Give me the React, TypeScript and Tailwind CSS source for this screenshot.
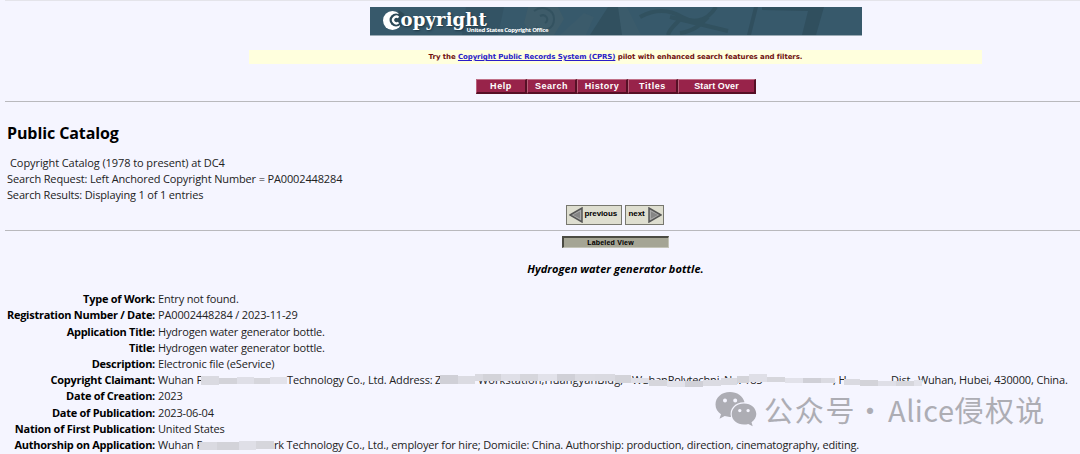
const NAV_BUTTONS = [
  { name: 'Help', width: 'w-[51px]', tracking: 'tracking-[0.6px]' },
  { name: 'Search', width: 'w-[50px]', tracking: 'tracking-[0.5px]' },
  { name: 'History', width: 'w-[51px]', tracking: 'tracking-[0.5px]' },
  { name: 'Titles', width: 'w-[50px]', tracking: 'tracking-[0.6px]' },
  { name: 'Start Over', width: 'w-[78px]', tracking: 'tracking-[0.1px]' },
];

const RECORD = [
  { label: 'Type of Work:', value: 'Entry not found.' },
  { label: 'Registration Number / Date:', value: 'PA0002448284 / 2023-11-29' },
  { label: 'Application Title:', value: 'Hydrogen water generator bottle.' },
  { label: 'Title:', value: 'Hydrogen water generator bottle.' },
  { label: 'Description:', value: 'Electronic file (eService)' },
  { label: 'Copyright Claimant:', value: <Claimant /> },
  { label: 'Date of Creation:', value: '2023' },
  { label: 'Date of Publication:', value: '2023-06-04' },
  { label: 'Nation of First Publication:', value: 'United States' },
  { label: 'Authorship on Application:', value: <Authorship /> },
];

const SMUDGE = ['#dadae1', '#d3d3d9', '#dfdfe7', '#d6d6dc', '#e2e2ea', '#d0d0d7', '#dbdbe2'];

// Mosaic strip, each block is [x, y, width, height]
function Smudge({ width, blocks }: { width: number; blocks: number[][] }) {
  return (
    <svg width={width} height="16" className="absolute left-0 top-0 overflow-visible">
      {blocks.map(([x, y, w, h], i) => (
        <rect key={i} x={x} y={y} width={w} height={h} fill={SMUDGE[i % SMUDGE.length]} />
      ))}
    </svg>
  );
}

function Claimant() {
  return (
    <span className="flex">
      <span className="w-[129px]">Wuhan F</span>
      <span className="w-[148px]">Technology Co., Ltd. Address: </span>
      <span className="w-[43px]">Z</span>
      <span className="w-[154px] tracking-[0.1px]">Workstation,HuangyanBldg,</span>
      <span className="w-[92px]">WuhanPolytechni</span>
      <span className="w-[109px]">No. 185</span>
      <span className="w-[58px]">, H</span>
      <span className="w-[27px]">Dist.</span>
      <span className="tracking-[-0.16px]">Wuhan, Hubei, 430000, China.</span>
      <Smudge
        width={900}
        blocks={[
          [43, 4, 18, 9], [61, 6, 18, 6], [79, 5, 17, 7], [96, 6, 16, 6], [112, 5, 17, 7],
          [282, 3, 18, 9], [300, 4, 17, 8], [317, 2, 8, 7], [325, 2, 18, 7], [343, 2, 19, 7],
          [362, 2, 18, 7], [380, 2, 19, 7], [399, 2, 18, 7], [417, 2, 20, 7], [437, 2, 20, 7],
          [457, 3, 16, 8], [473, 6, 18, 5], [491, 8, 18, 6], [509, 9, 18, 6], [527, 9, 18, 6],
          [545, 8, 18, 6], [563, 6, 16, 7], [579, 4, 12, 7], [591, 2, 18, 8], [609, 5, 18, 5],
          [627, 6, 18, 5], [645, 6, 18, 5], [663, 6, 14, 5], [686, 7, 16, 6], [702, 8, 18, 6],
          [720, 9, 18, 5], [738, 9, 18, 5], [756, 8, 8, 6],
        ]}
      />
    </span>
  );
}

function Authorship() {
  return (
    <span className="flex">
      <span className="w-[116px]">Wuhan F</span>
      <span className="tracking-[-0.17px]">rk Technology Co., Ltd., employer for hire; Domicile: China. Authorship: production, direction, cinematography, editing.</span>
      <Smudge
        width={120}
        blocks={[[41, 5, 18, 8], [59, 5, 22, 8], [81, 4, 17, 9], [98, 4, 18, 8]]}
      />
    </span>
  );
}

function Banner() {
  return (
    <div className="relative mx-auto h-[29px] w-[492px] overflow-hidden border-b border-[#9babb5] bg-[#37596b]">
      <svg width="492" height="28" className="absolute inset-0" fill="none">
        <path d="M96 0h38l-6 28H92z" fill="#335364" />
        <path d="M158 0h30l6 12-10 16h-22l-8-12z" fill="#3e5c6a" />
        <path d="M164 4c8-6 20-2 20 8s-10 14-18 8M170 9c6-3 10 4 5 7" stroke="#335260" strokeWidth="2" />
        <path d="M190 28l24-22 10 4-8 18zM245 0h12l14 28h-26z" fill="#3b5b6b" />
        <path d="M238 0h10l4 28h-32z" fill="#31505f" />
        <path d="M270 10c18-10 32-6 42 0s24 6 34-10M312 10c-4 6-12 10-14 18M338 10c-8 8-14 14-28 16M300 10l58 14" stroke="#31515f" strokeWidth="4" />
        <path d="M384 0h4l-7 28h-4zM436 0h18l-8 28h-14l6-24-46-1v-3z" fill="#304f5e" />
        <circle cx="22.500" cy="13.500" r="9.500" fill="#fff" />
        <circle cx="26" cy="13" r="6.500" fill="#2c4957" />
        <path d="M28.500 3l6 4-3 13-3-3z" fill="#2c4957" />
        <path d="M28.500 10.500a3.300 3.300 0 1 0 0 5" stroke="#fff" strokeWidth="2.200" />
      </svg>
      <span className="absolute left-[31px] top-[1px] whitespace-nowrap font-['DejaVu_Serif',serif] text-[18px] font-bold leading-[24px] tracking-[0.15px] text-white [text-shadow:1px_1px_2px_#1b3340]">
        opyright
      </span>
      <span className="absolute left-[97px] top-[18px] whitespace-nowrap font-['Open_Sans',sans-serif] text-[6px] font-bold leading-[10px] tracking-[-0.3px] text-white">
        United States Copyright Office
      </span>
    </div>
  );
}

function Watermark() {
  return (
    <div className="absolute left-[715px] top-[389px] flex h-[40px] items-center whitespace-nowrap font-['Noto_Sans_CJK_SC',sans-serif] text-[29px] leading-[40px] text-[#adadb4]">
      <svg width="42" height="36" viewBox="0 0 42 36">
        <path
          fill="currentColor"
          fillRule="evenodd"
          d="M15 1C6.500 1 .5 6.500 .5 13.500c0 4 2 7.500 5.500 9.800l-1.500 4.500 5.200-2.700c2 .6 4 1 6.300.8C14 18 20 11 29.500 11.300 28 5 22 1 15 1zM10 7.400a2 2 0 1 0 0 4 2 2 0 0 0 0-4zm10.200 0a2 2 0 1 0 0 4 2 2 0 0 0 0-4z"
        />
        <path
          fill="currentColor"
          fillRule="evenodd"
          d="M29 12.500c-7 0-12.300 4.700-12.300 10.600S22 33.600 29 33.600c1.600 0 3-.3 4.300-.7l4.400 2.400-1.200-4c3-2 4.800-5 4.800-8.200 0-6-5.300-10.600-12.300-10.600zm-4.200 5.400a1.700 1.700 0 1 0 0 3.400 1.700 1.700 0 0 0 0-3.400zm8.300 0a1.700 1.700 0 1 0 0 3.400 1.700 1.700 0 0 0 0-3.400z"
        />
      </svg>
      <span className="ml-[7px] w-[91px] tracking-[1.8px]">公众号</span>
      <span className="w-[30px] text-center">·</span>
      <span className="ml-[3px] tracking-[0.5px]">Alice</span>
      <span className="tracking-[1.4px]">侵权说</span>
    </div>
  );
}

export default function App() {
  return (
    <div className="relative h-[454px] w-[1080px] overflow-hidden bg-[#f5f5ff] font-['Open_Sans',sans-serif] text-[11px] tracking-[-0.16px] text-[#222]">
      <div className="ml-[5px] w-[1221px] border-t border-[#e4e4ea] pt-[6px]">
        <Banner />

        <div className="mx-auto mt-[14px] h-[14px] w-[733px] bg-[#ffffdd] text-center font-['DejaVu_Sans',sans-serif] text-[7px] font-bold leading-[15px] tracking-[-0.08px] text-[#701010]">
          Try the <a className="text-[#2a1cc8] underline">Copyright Public Records System (CPRS)</a> pilot with
          enhanced search features and filters.
        </div>

        <nav className="mt-[15px] flex justify-center">
          {NAV_BUTTONS.map((button) => (
            <button
              key={button.name}
              className={`h-[15px] border border-b-2 border-r-2 border-b-[#561026] border-l-[#b8607a] border-r-[#561026] border-t-[#c07088] bg-[#98234a] pl-px text-center font-['Liberation_Sans',sans-serif] text-[9px] font-bold leading-[12px] text-white ${button.width} ${button.tracking}`}
            >
              {button.name}
            </button>
          ))}
        </nav>

        <hr className="mt-[7px] border-[#b9b9bd]" />

        <h1 className="ml-[2px] mt-[20px] text-[16px] font-bold leading-[22px] tracking-[-0.1px] text-black">Public Catalog</h1>

        <div className="ml-[2px] mt-[11px] leading-[16.2px]">
          <p className="ml-[3px] tracking-[-0.08px]">Copyright Catalog (1978 to present) at DC4</p>
          <p className="tracking-[-0.14px]">Search Request: Left Anchored Copyright Number = PA0002448284</p>
          <p>Search Results: Displaying 1 of 1 entries</p>
        </div>

        <div className="mr-[2px] mt-[1px] flex justify-center gap-[3px] font-['Liberation_Sans',sans-serif] text-[8px] font-bold tracking-[-0.1px] text-black">
          <button className="flex h-[20px] w-[56px] items-center border border-[#77776f] bg-[#deded0] pl-[2px]">
            <svg width="14" height="16" viewBox="0 0 14 16">
              <path d="M1 8L13 1v14z" fill="#aaa" stroke="#555" strokeWidth="1.500" />
              <path d="M4 8l7-3.500v7z" fill="#858585" />
            </svg>
            <span className="mb-[2px] ml-[2px]">previous</span>
          </button>
          <button className="flex h-[20px] w-[39px] items-center border border-[#77776f] bg-[#deded0] pl-[3px]">
            <span className="mb-[2px]">next</span>
            <svg width="14" height="16" viewBox="0 0 14 16" className="ml-[3px]">
              <path d="M13 8L1 1v14z" fill="#aaa" stroke="#555" strokeWidth="1.500" />
              <path d="M10 8L3 4.500v7z" fill="#858585" />
            </svg>
          </button>
        </div>

        <hr className="mt-[5px] border-[#b9b9bd]" />

        <div className="mx-auto mt-[5px] h-[12px] w-[107px] border border-l-2 border-t-2 border-[#c4c4b8] border-l-[#4b4b43] border-t-[#4b4b43] bg-[#a5a595] pr-[11px] text-center font-['Liberation_Sans',sans-serif] text-[7px] font-bold leading-[9px] tracking-[0.2px] text-black">
          Labeled View
        </div>

        <h2 className="mt-[13px] text-center text-[11px] font-bold italic leading-[16px] tracking-[0.05px] text-black">
          Hydrogen water generator bottle.
        </h2>

        <dl className="mt-[14.5px] leading-[16.2px]">
          {RECORD.map((row) => (
            <div key={row.label} className="flex whitespace-nowrap">
              <dt className="w-[150px] text-right font-bold tracking-[-0.26px] text-black">{row.label}</dt>
              <dd className="relative ml-[3px]">{row.value}</dd>
            </div>
          ))}
        </dl>
      </div>

      <Watermark />
    </div>
  );
}
